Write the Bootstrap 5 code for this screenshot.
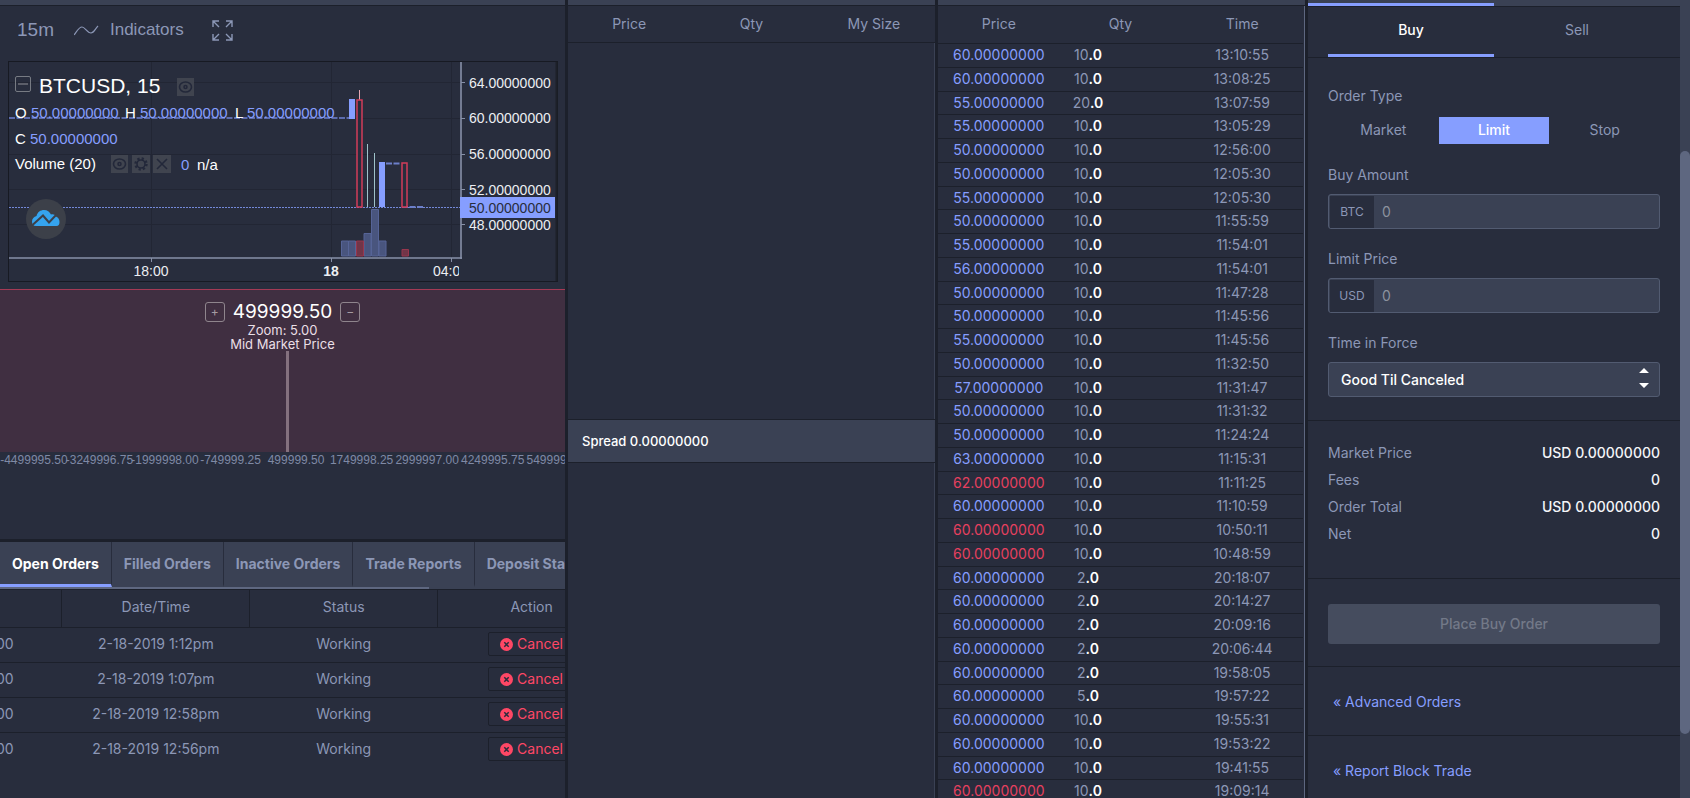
<!DOCTYPE html>
<html lang="en" data-bs-theme="dark">
<head>
<meta charset="utf-8">
<meta name="viewport" content="width=device-width, initial-scale=1">
<title>BTCUSD – Exchange</title>
<link href="https://cdn.jsdelivr.net/npm/bootstrap@5.3.0/dist/css/bootstrap.min.css" rel="stylesheet">
<style>
:root{--bg:#282d3d;--raised:#3a4154;--line:#1c202b;--dim:#8c97b6;--blue:#869eff;--red:#ff4765;--thumb:#5e6780}
body{background:var(--line);color:var(--dim);font-family:Inter,"Liberation Sans",sans-serif;font-size:14px;line-height:20px}
.desk{height:100vh;display:grid;grid-template-columns:565fr 367fr 367fr 382fr;gap:3px;overflow:hidden}
.panel{background:var(--bg);min-width:0;overflow:hidden}
.strip{height:6px;background:var(--raised);border-bottom:1px solid var(--line);flex:none}
.arial{font-family:"Liberation Sans",Arial,sans-serif}
.tools button{background:none;border:0;padding:0;color:var(--dim)}
.tools{height:55px;padding:0 17px 7px;font-size:17px}
.interval{font-size:19px}
.chart{padding:0 7px 0 8px}
.chart>svg,.depth>svg{display:block;width:100%}
.depth{margin-top:7px;border-top:1px solid #a43a55}
.depth-fill{height:162px;background:#402f41;color:#eadfe6;font-size:13px;line-height:14px;padding-top:11px}
.mid{font-size:19px;line-height:22px;height:22px;color:#fff}
.zoom-btn{width:20px;height:20px;border:1px solid #8f858d;border-radius:3px;background:none;color:#a59ba2;font-size:12px;line-height:16px;padding:0}
.mid-line{width:3px;background:#84717e;margin-left:10px}
.orders{border-top:3px solid var(--line);height:259px;flex:none}
.order-tabs{background:var(--raised);height:45px;font-weight:700;font-size:14px}
.order-tabs .nav-link{color:var(--dim);padding:12px 12px 10px;border-right:1px solid var(--bg);border-bottom:3px solid transparent;border-radius:0;height:45px;white-space:nowrap}
.order-tabs .nav-link.active{color:#fff;border-bottom-color:var(--blue)}
.tab-scroll{height:3px;background:var(--raised);border-bottom:1px solid var(--line)}
.tab-scroll div{height:2px;width:76%;background:var(--thumb)}
.grid-table{width:752px;margin-left:-126px;table-layout:fixed;text-align:center;border-collapse:collapse}
.grid-table th{font-weight:400;height:37px;padding:0 0 2px;border-right:1px solid var(--line);border-bottom:1px solid var(--line)}
.grid-table td{height:35px;padding:0 0 2px;border-bottom:1px solid var(--line)}
.grid-table tr:last-child td{border-bottom:0}
.cancel{background:none;border:1px solid var(--line);border-radius:2px;color:var(--red);height:24px;width:88px;padding:0;font-size:14px;line-height:20px}
.heads{height:37px;border-bottom:1px solid var(--line);flex:none}
.spread{background:var(--raised);height:44px;border-top:1px solid var(--line);border-bottom:1px solid var(--line);color:#fff;padding-left:14px;font-weight:500;font-size:13px}
.book-asks{flex:376 0 0}.book-bids{flex:335 0 0}
.rail{border-right:1px solid var(--raised)}
.trades{width:100%;table-layout:fixed;text-align:center;border-collapse:collapse}
.trades thead th{font-weight:400;height:37px;padding:0;border-bottom:1px solid var(--line)}
.trade-area{border-right:1px solid var(--thumb);padding-right:1px;overflow:hidden}
.trades tbody td{height:24px;padding:0;border-bottom:1px solid var(--line);line-height:20px}
.trades tbody tr:nth-child(4n+3) td{height:23px}
.trades td.qty{padding-right:65px}
.trades b{color:#fff;font-weight:600}
.up{color:var(--blue)}.down{color:#e6405f}
.ticket-strip{height:7px;background:var(--raised);border-bottom:1px solid var(--line)}
.ticket-strip div{width:50%;height:6px;border-bottom:3px solid var(--blue)}
.side-tabs{height:51px;padding:0 20px;border-bottom:1px solid var(--line)}
.side-tabs button{background:none;border:0;border-bottom:3px solid transparent;color:var(--dim);padding:0 0 2px}
.side-tabs .on{color:#fff;border-color:var(--blue);font-weight:500}
.ticket form{padding:28px 20px 23px;border-bottom:1px solid var(--line)}
.kinds{margin:11px 0 21px}
.kinds label{height:27px;line-height:25px;cursor:pointer}
.kinds input:checked+label{background:var(--blue);color:#fff;font-weight:500}
.money{height:35px;border:1px solid #525b71;border-radius:3px;background:var(--raised);margin:9px 0 20px}
.money span{width:44px;margin:1px 0 0 1px;background:var(--bg);font-size:12px}
.money input{border:0;background:none;color:#fff;padding:0 8px;outline:0;min-width:0}
.money input::placeholder{color:#8c929e;opacity:1}
.tif{height:35px;width:100%;border:1px solid #525b71;border-radius:3px;margin-top:9px;padding:0 12px;color:#fff;font-weight:500;font-size:14px;appearance:none;background:var(--raised) url("data:image/svg+xml,%3Csvg xmlns='http://www.w3.org/2000/svg' width='10' height='20'%3E%3Cpath d='M0 5L5 0l5 5zM0 15l5 5 5-5z' fill='%23fff'/%3E%3C/svg%3E") no-repeat right 10px top 5px}
.totals{padding:18px 20px 31px;border-bottom:1px solid var(--line)}
.totals dt{font-weight:400}.totals dd{color:#f4f5f8;font-weight:500;margin:0}
.totals>div{padding:4px 0 3px}
.place{padding:25px 20px 22px;border-bottom:1px solid var(--line)}
.place button{height:40px;width:100%;border:0;border-radius:3px;background:#454c5e;color:#737988;font-weight:500}
.more{padding:25px 25px 23px;border-bottom:1px solid var(--line)}
.more a{color:var(--blue);text-decoration:none}
.bar{width:10px;background:var(--raised);padding-top:151px;flex:none}
.bar div{height:583px;border-radius:5px;background:var(--thumb)}
</style>
</head>
<body>
<main class="desk">

  <section class="panel d-flex flex-column" aria-label="Chart">
    <div class="strip"></div>
    <div class="tools arial d-flex align-items-center">
      <button class="interval me-3" type="button">15m</button>
      <button class="d-flex align-items-center ms-1" type="button">
        <svg class="me-2" width="28" height="14" viewBox="2 0 28 14" fill="none" stroke="currentColor" stroke-width="1.2"><path d="M2 12C5 8 7 4 10 4s5 6 9 6c3 0 4-4 7-7"/></svg>Indicators
      </button>
      <button class="ms-4 ps-1 d-flex" type="button" aria-label="Full screen">
        <svg width="21" height="21" viewBox="0 0 21 21" fill="none" stroke="currentColor" stroke-width="1.4"><path d="M1 7V1h6M1 1l6 6M14 1h6v6M20 1l-6 6M1 14v6h6M1 20l6-6M20 14v6h-6M20 20l-6-6"/></svg>
      </button>
    </div>

    <div class="chart arial">
      <svg viewBox="8 61 550 221" font-size="15" fill="#fff">
        <rect x="8.500" y="61.500" width="549" height="220" fill="none" stroke="#171a23"/>
        <path d="M556.500 62v219" stroke="#1d2029" stroke-width="2"/>
        <g stroke="#222634"><path d="M151.500 62v196M331.500 62v196M451.500 62v196M9 82.500h452M9 118.500h452M9 154.500h452M9 189.500h452M9 224.500h452"/></g>
        <path d="M9 118h340" stroke="#6f83d3" stroke-width="1.500" stroke-dasharray="6 1.500"/>
        <g fill="#49557e" stroke="#566497"><path d="M341.500 241h7v15h-7zM348.500 241h7v15h-7zM364 233.500h7V256h-7zM371.500 209.500h7V256h-7zM379 241h7v15h-7z"/></g>
        <g fill="#713548" stroke="#97364d"><path d="M356.500 241h7v15h-7zM402 249.500h6.500v6.500H402z"/></g>
        <path d="M9 207.500h452" stroke="#7388d8" stroke-dasharray="2 1"/>
        <path d="M386 163.500h15M402 207h21" stroke="#6c7fc9" stroke-width="2" stroke-dasharray="6 1.500"/>
        <path d="M359.500 90v10" stroke="#e8aab5"/><path d="M367.500 144v63M374.500 153v54" stroke="#9fc2c9"/>
        <path d="M349 99h6v20h-6zM379 162h6v45h-6z" fill="#869eff"/>
        <g fill="#282d3d" stroke="#d13c5a" stroke-width="1.500"><path d="M357 100h5v107h-5zM402 163h5v44h-5z"/></g>
        <path d="M461 62v197M9 258h453" stroke="#8790a8" stroke-width="1.600"/>
        <path d="M461 82.500h4M461 118.500h4M461 154.500h4M461 189.500h4M461 224.500h4M151.500 258v4M331.500 258v4M451.500 258v4" stroke="#8790a8"/>
        <g font-size="14" fill="#eceef2">
          <text x="469" y="88">64.00000000</text><text x="469" y="123">60.00000000</text><text x="469" y="159">56.00000000</text><text x="469" y="195">52.00000000</text><text x="469" y="230">48.00000000</text>
          <rect x="460" y="197" width="95" height="21" fill="#869eff"/><text x="469" y="213" fill="#282d3d">50.00000000</text>
          <text x="151" y="276" text-anchor="middle">18:00</text><text x="331" y="276" text-anchor="middle" font-weight="700">18</text>
          <svg x="430" y="262" width="29" height="18" viewBox="430 262 29 18"><text x="433" y="276">04:00</text></svg>
        </g>
        <rect x="15.500" y="76.500" width="15" height="15" rx="1.500" fill="none" stroke="#777b83"/><path d="M18 84h10" stroke="#777b83" stroke-width="1.300"/>
        <text x="39" y="93" font-size="21">BTCUSD, 15</text>
        <g fill="#40444f"><path d="M177 78h17v18h-17zM111 155h17v18h-17zM132 155h18v18h-18zM153 155h18v18h-18z"/></g>
        <g fill="none" stroke="#23283a" stroke-width="1.600">
          <g id="eye"><ellipse cx="185.500" cy="87" rx="6" ry="5"/><circle cx="185.500" cy="87" r="1.500"/></g>
          <use href="#eye" x="-66" y="77"/>
          <circle cx="141" cy="164" r="4"/><circle cx="141" cy="164" r="5.500" stroke-dasharray="2.200 2.120" stroke-width="2.400"/>
          <path d="M157 159l10 10M167 159l-10 10"/>
        </g>
        <text x="15" y="118">O</text><text x="31" y="118" fill="#869eff">50.00000000</text>
        <text x="125" y="118">H</text><text x="140" y="118" fill="#869eff">50.00000000</text>
        <text x="235" y="118">L</text><text x="247" y="118" fill="#869eff">50.00000000</text>
        <text x="15" y="144">C</text><text x="30" y="144" fill="#869eff">50.00000000</text>
        <text x="15" y="169">Volume (20)</text><text x="181" y="170" fill="#869eff">0</text><text x="197" y="170">n/a</text>
        <circle cx="46" cy="219" r="20" fill="#3c4049"/>
        <path d="M36 226c-3 0-4-2-4-4.500 0-3 2-4.500 4.500-5.500 1-4 4-6 7.500-6 3.500 0 5.500 2 7 4.500 2-.5 4 0 5 2 2.500 1 3.500 3 3.500 5.500s-1 4-3 4z" fill="#35a4ef"/>
        <path d="M32.500 225l10.500-9.500 6 7 8-8.500" fill="none" stroke="#3c4049" stroke-width="2"/>
      </svg>
    </div>

    <div class="depth">
      <div class="depth-fill d-flex flex-column align-items-center">
        <div class="mid d-flex align-items-center gap-2">
          <button class="zoom-btn" type="button" aria-label="Zoom in">+</button><span>499999.50</span><button class="zoom-btn" type="button" aria-label="Zoom out">−</button>
        </div>
        <div>Zoom: 5.00</div><div>Mid Market Price</div>
        <div class="mid-line flex-fill"></div>
      </div>
      <svg class="arial" height="18" id="axis" font-size="12" fill="#7f89a5" text-anchor="middle"></svg>
    </div>

    <div class="orders mt-auto">
      <nav class="nav flex-nowrap order-tabs overflow-hidden">
        <a class="nav-link active" href="#">Open Orders</a><a class="nav-link" href="#">Filled Orders</a><a class="nav-link" href="#">Inactive Orders</a><a class="nav-link" href="#">Trade Reports</a><a class="nav-link" href="#">Deposit Status</a>
      </nav>
      <div class="tab-scroll"><div></div></div>
      <table class="grid-table">
        <thead><tr><th>Price</th><th>Date/Time</th><th>Status</th><th>Action</th></tr></thead>
        <tbody id="orders"></tbody>
      </table>
    </div>
  </section>

  <section class="panel d-flex flex-column" aria-label="Order book">
    <div class="strip"></div>
    <div class="heads row g-0 text-center align-items-center"><div class="col">Price</div><div class="col">Qty</div><div class="col">My Size</div></div>
    <div class="book-asks rail"></div>
    <div class="spread d-flex align-items-center">Spread 0.00000000</div>
    <div class="book-bids rail"></div>
  </section>

  <section class="panel" aria-label="Recent trades">
    <div class="strip"></div>
    <div class="trade-area">
      <table class="trades">
        <thead><tr><th>Price</th><th>Qty</th><th>Time</th></tr></thead>
        <tbody id="trades"></tbody>
      </table>
    </div>
  </section>

  <section class="panel d-flex" aria-label="Order ticket">
    <div class="ticket flex-fill">
      <div class="ticket-strip"><div></div></div>
      <div class="side-tabs d-flex"><button class="on flex-fill w-50" type="button">Buy</button><button class="flex-fill w-50" type="button">Sell</button></div>
      <form>
        <div>Order Type</div>
        <div class="kinds row g-0 text-center">
          <div class="col"><input class="visually-hidden" type="radio" name="kind" id="k1"><label class="d-block" for="k1">Market</label></div>
          <div class="col"><input class="visually-hidden" type="radio" name="kind" id="k2" checked><label class="d-block" for="k2">Limit</label></div>
          <div class="col"><input class="visually-hidden" type="radio" name="kind" id="k3"><label class="d-block" for="k3">Stop</label></div>
        </div>
        <label class="d-block" for="amt">Buy Amount</label>
        <div class="money d-flex"><span class="d-flex align-items-center justify-content-center">BTC</span><input class="flex-fill" id="amt" placeholder="0"></div>
        <label class="d-block" for="lim">Limit Price</label>
        <div class="money d-flex"><span class="d-flex align-items-center justify-content-center">USD</span><input class="flex-fill" id="lim" placeholder="0"></div>
        <label class="d-block" for="tif">Time in Force</label>
        <select class="tif d-block" id="tif"><option>Good Til Canceled</option></select>
      </form>
      <dl class="totals mb-0">
        <div class="d-flex justify-content-between"><dt>Market Price</dt><dd>USD 0.00000000</dd></div>
        <div class="d-flex justify-content-between"><dt>Fees</dt><dd>0</dd></div>
        <div class="d-flex justify-content-between"><dt>Order Total</dt><dd>USD 0.00000000</dd></div>
        <div class="d-flex justify-content-between"><dt>Net</dt><dd>0</dd></div>
      </dl>
      <div class="place"><button type="button" disabled>Place Buy Order</button></div>
      <div class="more"><a href="#">« Advanced Orders</a></div>
      <div class="more"><a href="#">« Report Block Trade</a></div>
    </div>
    <div class="bar"><div></div></div>
  </section>
</main>

<script src="https://cdn.jsdelivr.net/npm/bootstrap@5.3.0/dist/js/bootstrap.bundle.min.js"></script>
<script>
const trades = `60 10 13:10:55|60 10 13:08:25|55 20 13:07:59|55 10 13:05:29|50 10 12:56:00|50 10 12:05:30|55 10 12:05:30|50 10 11:55:59|55 10 11:54:01|56 10 11:54:01|50 10 11:47:28|50 10 11:45:56|55 10 11:45:56|50 10 11:32:50|57 10 11:31:47|50 10 11:31:32|50 10 11:24:24|63 10 11:15:31|62 10 11:11:25 d|60 10 11:10:59|60 10 10:50:11 d|60 10 10:48:59 d|60 2 20:18:07|60 2 20:14:27|60 2 20:09:16|60 2 20:06:44|60 2 19:58:05|60 5 19:57:22|60 10 19:55:31|60 10 19:53:22|60 10 19:41:55|60 10 19:09:14 d`;
document.getElementById('trades').innerHTML = trades.split('|').map(r => {
  const [p, q, t, d] = r.split(' ');
  return `<tr><td class="${d ? 'down' : 'up'}">${p}.00000000</td><td class="qty">${q}<b>.0</b></td><td>${t}</td></tr>`;
}).join('');
document.getElementById('orders').innerHTML = ['1:12pm', '1:07pm', '12:58pm', '12:56pm'].map(t =>
  `<tr><td>60.00000000</td><td>2-18-2019 ${t}</td><td>Working</td><td><button class="cancel" type="button"><svg class="me-1" width="13" height="13" viewBox="0 0 13 13"><circle cx="6.500" cy="6.500" r="6.500" fill="#ff4765"/><path d="M4.300 4.300l4.400 4.400M8.700 4.300L4.300 8.700" stroke="#282d3d" stroke-width="1.500"/></svg>Cancel</button></td></tr>`).join('');
document.getElementById('axis').innerHTML = ['-4499995.50', '-3249996.75', '-1999998.00', '-749999.25', '499999.50', '1749998.25', '2999997.00', '4249995.75', '5499994.50'].map((v, i) =>
  `<text x="${(6 + i * 11.6).toFixed(1)}%" y="12">${v}</text>`).join('');
</script>
</body>
</html>
